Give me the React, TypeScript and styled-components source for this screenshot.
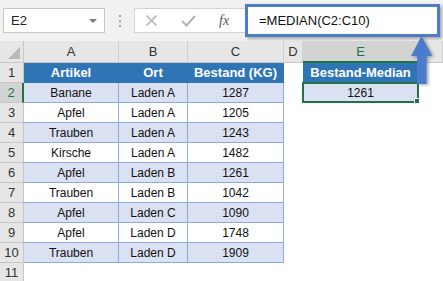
import styled, { createGlobalStyle } from "styled-components";

const GlobalStyle = createGlobalStyle`
    html, body { margin: 0; padding: 0; background: #fff; }
    body { font-family: "Liberation Sans", Arial, sans-serif; }
`

const Screen = styled.div`
    position: relative;
    width: 443px; height: 281px;
    overflow: hidden;
    background: #fff;
`

const Toolbar = styled.div`
    display: flex;
    align-items: center;
    height: 41px;
    padding-left: 3px;
    box-sizing: border-box;
    background: #f1f1f1;
`

const NameBox = styled.div`
    display: flex;
    align-items: center;
    justify-content: space-between;
    width: 102px; height: 25px;
    box-sizing: border-box;
    padding: 0 7px 0 7px;
    background: #fff;
    border: 1px solid #c6c6c6;
    font-size: 13px;
    color: #222;
`

const DropTriangle = styled.span`
    width: 0; height: 0;
    border-left: 4px solid transparent;
    border-right: 4px solid transparent;
    border-top: 4px solid #7a7a7a;
`

const Grip = styled.div`
    display: flex;
    flex-direction: column;
    gap: 3px;
    margin: 0 13px 0 14px;
    & span {
        width: 2px; height: 2px;
        background: #a6a6a6;
    }
`

const FxGroup = styled.div`
    display: flex;
    align-items: center;
    width: 113px; height: 25px;
    box-sizing: border-box;
    background: #fff;
    border: 1px solid #d4d4d4;
    border-right: none;
    padding-left: 10px;
    gap: 23px;
`

const FxText = styled.span`
    font-family: "Liberation Serif", "Times New Roman", serif;
    font-style: italic;
    font-size: 14px;
    color: #555;
`

const FormulaInput = styled.div`
    display: flex;
    align-items: center;
    width: 195px; height: 33px;
    box-sizing: border-box;
    margin-left: -2px;
    padding-left: 11px;
    background: #fff;
    border: 3px solid #4f7cc7;
    box-shadow: 2px 2px 3px rgba(0,0,0,0.3);
    font-size: 13px;
    color: #111;
`

const Sheet = styled.div`
    display: grid;
    grid-template-columns: 24px 95px 69px 96px 19px 116px 1fr;
    grid-template-rows: 22px repeat(11, 20px);
`

const Corner = styled.div`
    background: #e6e6e6;
    border-right: 1px solid #c6c6c6;
    border-bottom: 1px solid #c6c6c6;
    display: flex;
    align-items: flex-end;
    justify-content: flex-end;
    padding: 0 3px 3px 0;
    & span {
        width: 0; height: 0;
        border-left: 12px solid transparent;
        border-bottom: 12px solid #b8b8b8;
    }
`

const ColHead = styled.div<{ $selected?: boolean }>`
    display: flex;
    align-items: center;
    justify-content: center;
    font-size: 13px;
    background: ${p => p.$selected ? "#d3d3d3" : "#e6e6e6"};
    color: ${p => p.$selected ? "#217346" : "#333"};
    border-right: 1px solid #cfcfcf;
    border-bottom: ${p => p.$selected ? "2px solid #217346" : "1px solid #c6c6c6"};
`

const RowHead = styled.div<{ $selected?: boolean }>`
    display: flex;
    align-items: center;
    justify-content: center;
    font-size: 13px;
    background: ${p => p.$selected ? "#d3d3d3" : "#e6e6e6"};
    color: ${p => p.$selected ? "#217346" : "#333"};
    border-bottom: 1px solid #c6c6c6;
    border-right: ${p => p.$selected ? "2px solid #217346" : "1px solid #c6c6c6"};
`

const Cell = styled.div<{ $kind: "head" | "band" | "plain" | "empty" }>`
    position: relative;
    display: flex;
    align-items: center;
    justify-content: center;
    box-sizing: border-box;
    font-size: ${p => p.$kind === "head" ? "13px" : "12px"};
    font-weight: ${p => p.$kind === "head" ? "bold" : "normal"};
    color: ${p => p.$kind === "head" ? "#fff" : "#111"};
    background: ${p => p.$kind === "head" ? "#2f75b5" : p.$kind === "band" ? "#d9e1f2" : "#fff"};
    border-bottom: ${p => p.$kind === "empty" ? "none" : p.$kind === "head" ? "1px solid #2f75b5" : "1px solid #8eaadb"};
    border-right: ${p => p.$kind === "empty" ? "none" : p.$kind === "head" ? "1px solid #2f75b5" : "1px solid #8eaadb"};
    white-space: nowrap;
`

const Selection = styled.div`
    position: absolute;
    inset: -1px -1px -1px -1px;
    border: 2px solid #217346;
    pointer-events: none;
    &::after {
        content: "";
        position: absolute;
        right: -4px; bottom: -4px;
        width: 5px; height: 5px;
        background: #217346;
        border: 1px solid #fff;
    }
`

const Arrow = styled.svg`
    position: absolute;
    left: 409px; top: 35px;
    filter: drop-shadow(2px 1px 1.5px rgba(0,0,0,0.35));
`

const columns = ["A", "B", "C", "D", "E", "F"];

const rows = [
    ["Banane", "Laden A", "1287"],
    ["Apfel", "Laden A", "1205"],
    ["Trauben", "Laden A", "1243"],
    ["Kirsche", "Laden A", "1482"],
    ["Apfel", "Laden B", "1261"],
    ["Trauben", "Laden B", "1042"],
    ["Apfel", "Laden C", "1090"],
    ["Apfel", "Laden D", "1748"],
    ["Trauben", "Laden D", "1909"],
];

const App = () => {
    return (
        <Screen>
            <GlobalStyle />
            <Toolbar>
                <NameBox>
                    <span>E2</span>
                    <DropTriangle />
                </NameBox>
                <Grip><span /><span /><span /></Grip>
                <FxGroup>
                    <svg width="13" height="13" viewBox="0 0 13 13">
                        <path d="M1.5 1.5 L11.5 11.5 M11.5 1.5 L1.5 11.5" stroke="#b4b4b4" strokeWidth="1.6" fill="none" />
                    </svg>
                    <svg width="15" height="13" viewBox="0 0 15 13">
                        <path d="M1 7 L5.5 11.5 L14 2" stroke="#b4b4b4" strokeWidth="2" fill="none" />
                    </svg>
                    <FxText>fx</FxText>
                </FxGroup>
                <FormulaInput>=MEDIAN(C2:C10)</FormulaInput>
            </Toolbar>
            <Sheet>
                <Corner><span /></Corner>
                {columns.map(c => (
                    <ColHead key={c} $selected={c === "E"}>{c === "F" ? "" : c}</ColHead>
                ))}

                <RowHead>1</RowHead>
                <Cell $kind="head">Artikel</Cell>
                <Cell $kind="head">Ort</Cell>
                <Cell $kind="head">Bestand (KG)</Cell>
                <Cell $kind="empty" />
                <Cell $kind="head">Bestand-Median</Cell>
                <Cell $kind="empty" />

                {rows.map((r, i) => {
                    const kind = i % 2 === 0 ? "band" : "plain";
                    return [
                        <RowHead key={"h" + i} $selected={i === 0}>{i + 2}</RowHead>,
                        <Cell key={"a" + i} $kind={kind}>{r[0]}</Cell>,
                        <Cell key={"b" + i} $kind={kind}>{r[1]}</Cell>,
                        <Cell key={"c" + i} $kind={kind}>{r[2]}</Cell>,
                        <Cell key={"d" + i} $kind="empty" />,
                        i === 0
                            ? <Cell key={"e" + i} $kind="band">1261<Selection /></Cell>
                            : <Cell key={"e" + i} $kind="empty" />,
                        <Cell key={"f" + i} $kind="empty" />,
                    ];
                })}

                <RowHead>11</RowHead>
                {columns.map(c => <Cell key={"r11" + c} $kind="empty" />)}
            </Sheet>
            <Arrow width="26" height="50" viewBox="0 0 26 50">
                <path d="M12.5 1 L23 21 L17.5 21 L17.5 49 L8 49 L8 21 L2 21 Z" fill="#4a7bcc" />
            </Arrow>
        </Screen>
    );
}

export default App;
